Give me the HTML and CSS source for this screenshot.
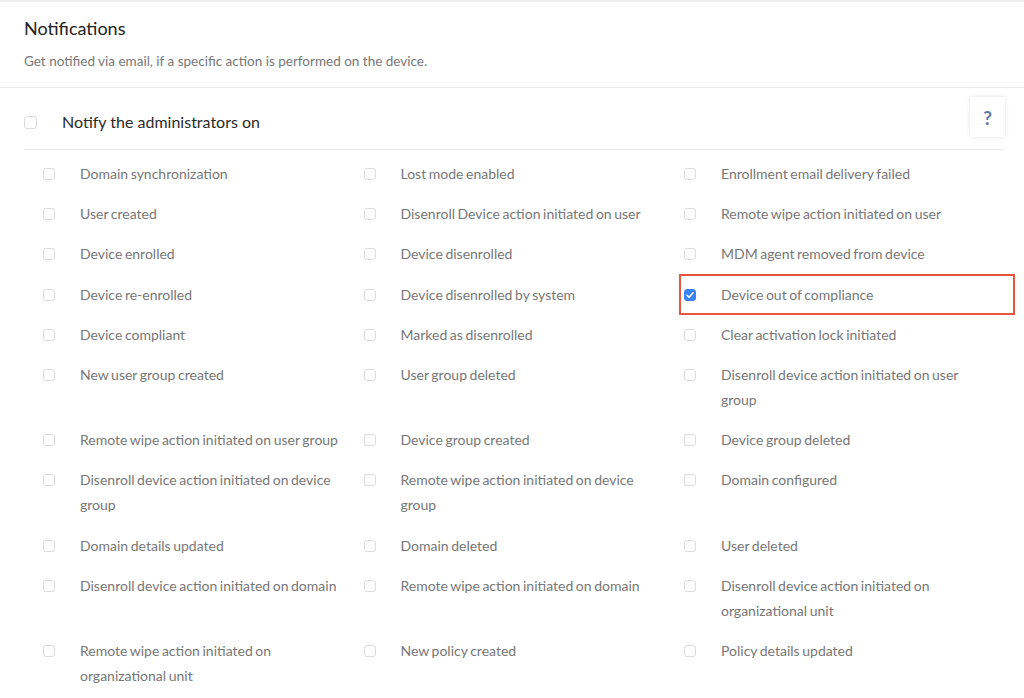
FILE: index.html
```html
<!DOCTYPE html>
<html lang="en">
<head>
    <meta charset="UTF-8">
    <meta name="viewport" content="width=device-width, initial-scale=1.0">
    <title>Notifications</title>
    <link rel="stylesheet" href="styles.css">
</head>
<body>

<div class="page">
    <div class="header">
        <h2>Notifications</h2>
        <p class="subtitle">Get notified via email, if a specific action is performed on the device.</p>
    </div>

    <div class="admin-row">
        <div class="admin-label">
            <span class="check"></span>
            <span>Notify the administrators on</span>
        </div>
        <button class="help-btn">?</button>
    </div>

    <div class="options">
        <div class="option"><span class="check"></span><span class="label">Domain synchronization</span></div>
        <div class="option"><span class="check"></span><span class="label">Lost mode enabled</span></div>
        <div class="option"><span class="check"></span><span class="label">Enrollment email delivery failed</span></div>

        <div class="option"><span class="check"></span><span class="label">User created</span></div>
        <div class="option"><span class="check"></span><span class="label">Disenroll Device action initiated on user</span></div>
        <div class="option"><span class="check"></span><span class="label">Remote wipe action initiated on user</span></div>

        <div class="option"><span class="check"></span><span class="label">Device enrolled</span></div>
        <div class="option"><span class="check"></span><span class="label">Device disenrolled</span></div>
        <div class="option"><span class="check"></span><span class="label">MDM agent removed from device</span></div>

        <div class="option"><span class="check"></span><span class="label">Device re-enrolled</span></div>
        <div class="option"><span class="check"></span><span class="label">Device disenrolled by system</span></div>
        <div class="option selected">
            <span class="check checked">
                <svg width="10" height="10" viewBox="0 0 10 10"><path d="M2 5.2 L4.1 7.3 L8 2.8" fill="none" stroke="#fff" stroke-width="1.6" stroke-linecap="round" stroke-linejoin="round"/></svg>
            </span>
            <span class="label">Device out of compliance</span>
            <span class="highlight"></span>
        </div>

        <div class="option"><span class="check"></span><span class="label">Device compliant</span></div>
        <div class="option"><span class="check"></span><span class="label">Marked as disenrolled</span></div>
        <div class="option"><span class="check"></span><span class="label">Clear activation lock initiated</span></div>

        <div class="option"><span class="check"></span><span class="label">New user group created</span></div>
        <div class="option"><span class="check"></span><span class="label">User group deleted</span></div>
        <div class="option"><span class="check"></span><span class="label">Disenroll device action initiated on user group</span></div>

        <div class="option"><span class="check"></span><span class="label">Remote wipe action initiated on user group</span></div>
        <div class="option"><span class="check"></span><span class="label">Device group created</span></div>
        <div class="option"><span class="check"></span><span class="label">Device group deleted</span></div>

        <div class="option"><span class="check"></span><span class="label">Disenroll device action initiated on device group</span></div>
        <div class="option"><span class="check"></span><span class="label">Remote wipe action initiated on device group</span></div>
        <div class="option"><span class="check"></span><span class="label">Domain configured</span></div>

        <div class="option"><span class="check"></span><span class="label">Domain details updated</span></div>
        <div class="option"><span class="check"></span><span class="label">Domain deleted</span></div>
        <div class="option"><span class="check"></span><span class="label">User deleted</span></div>

        <div class="option"><span class="check"></span><span class="label">Disenroll device action initiated on domain</span></div>
        <div class="option"><span class="check"></span><span class="label">Remote wipe action initiated on domain</span></div>
        <div class="option"><span class="check"></span><span class="label">Disenroll device action initiated on organizational unit</span></div>

        <div class="option"><span class="check"></span><span class="label">Remote wipe action initiated on organizational unit</span></div>
        <div class="option"><span class="check"></span><span class="label">New policy created</span></div>
        <div class="option"><span class="check"></span><span class="label">Policy details updated</span></div>
    </div>
</div>

</body>
</html>
```

FILE: styles.css
```css
body {
    font-family: Lato, "Open Sans", sans-serif;
    background-color: #fff;
    margin: 0;
    color: #333;
}

.page {
    border-top: 2px solid #efefef;
}

.header {
    padding: 14px 24px 16px;
    border-bottom: 1px solid #ececec;
}

.header h2 {
    margin: 0;
    font-size: 18px;
    font-weight: 400;
    line-height: 24px;
    color: #222;
}

.subtitle {
    margin: 11px 0 0;
    font-size: 13.5px;
    line-height: 20px;
    color: #777;
}

.admin-row {
    display: flex;
    justify-content: space-between;
    align-items: flex-start;
    margin: 0 19px 0 24px;
    border-bottom: 1px solid #ececec;
}

.admin-label {
    display: flex;
    align-items: center;
    padding: 22px 0 15px;
    font-size: 16px;
    line-height: 24px;
    color: #2a2a2a;
}

.admin-label .check {
    width: 13px;
    height: 13px;
    margin-top: 0;
    margin-right: 25px;
}

.help-btn {
    margin-top: 9px;
    width: 35px;
    height: 40px;
    border: none;
    background-color: #fff;
    box-shadow: 0 0 4px rgba(0, 0, 0, 0.12);
    color: #5b78a6;
    font-family: Lato, sans-serif;
    font-size: 19px;
    font-weight: 700;
    cursor: pointer;
    padding: 0;
}

.options {
    display: grid;
    grid-template-columns: repeat(3, 320.5px);
    padding: 3.5px 0 0 24px;
}

.option {
    position: relative;
    display: flex;
    align-items: flex-start;
    padding: 7.6px 0 7.6px 19px;
    font-size: 14px;
    line-height: 25px;
    word-spacing: -1px;
    color: #777;
}

.check {
    flex: none;
    box-sizing: border-box;
    width: 12px;
    height: 12px;
    margin-top: 7px;
    margin-right: 25px;
    border: 1px solid #dcdcdc;
    border-radius: 3px;
    background-color: #fff;
    display: flex;
    justify-content: center;
    align-items: center;
}

.check.checked {
    background-color: #3a82f7;
    border-color: #3a82f7;
}

/* red frame around the selected option */
.highlight {
    position: absolute;
    left: 14px;
    top: 0;
    width: 336px;
    height: 41px;
    box-sizing: border-box;
    border: 2px solid #e8553c;
}
```
